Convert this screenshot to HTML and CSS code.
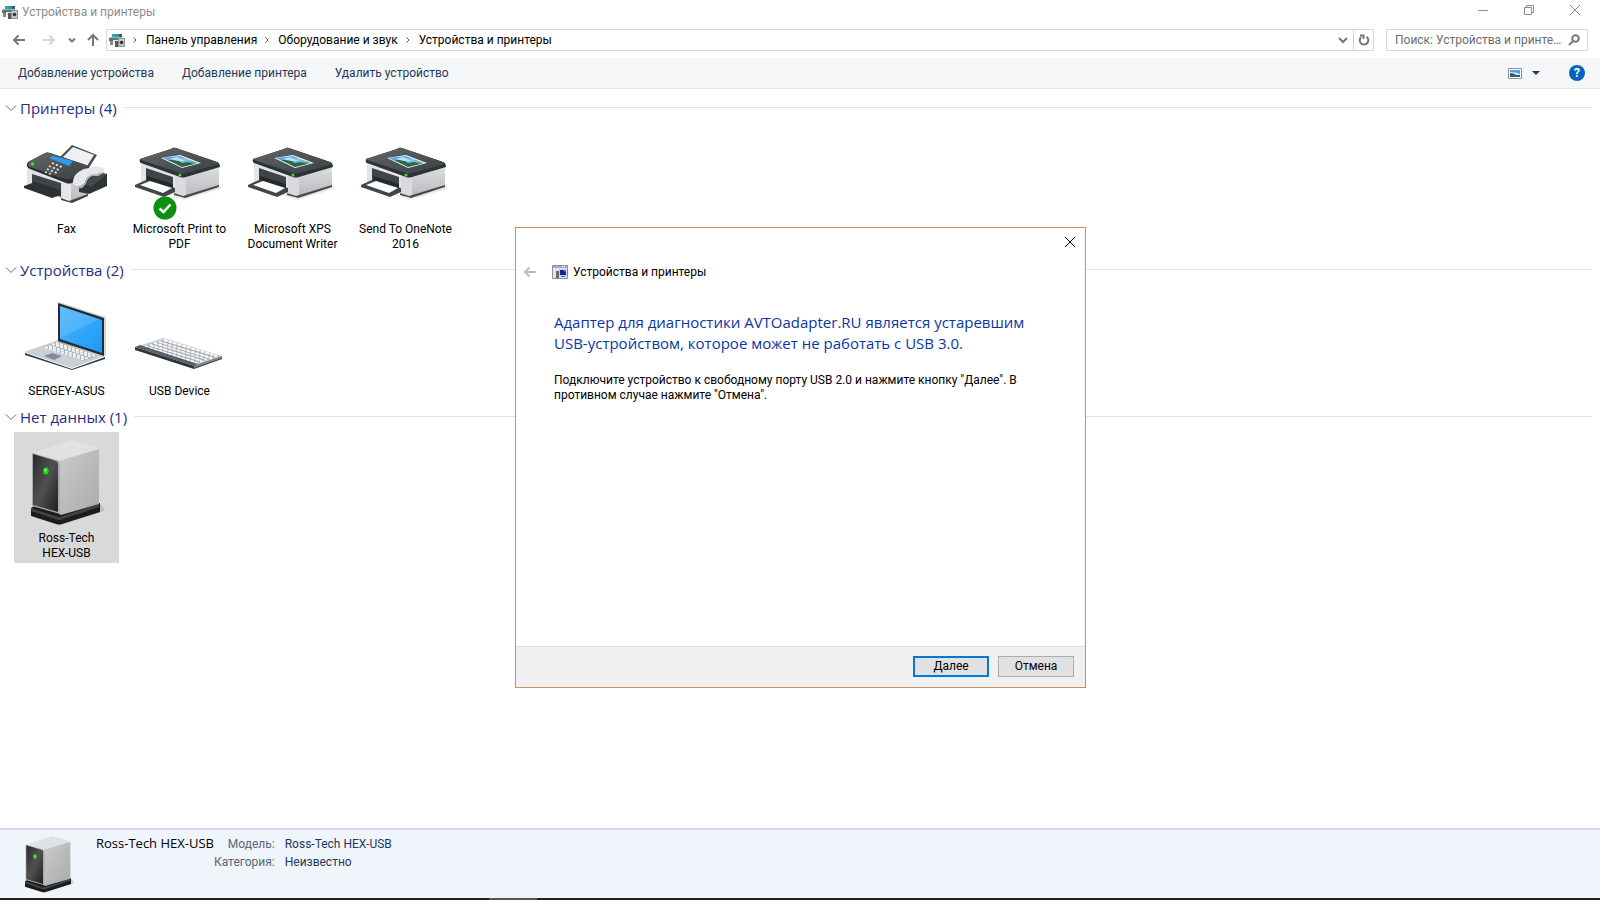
FILE: index.html
```html
<!DOCTYPE html>
<html lang="ru">
<head>
    <meta charset="UTF-8">
    <meta name="viewport" content="width=device-width, initial-scale=1.0">
    <title>Устройства и принтеры</title>
    <link rel="stylesheet" href="styles.css">
</head>
<body>
    <!-- Shared icons -->
    <svg class="sprite" width="0" height="0" aria-hidden="true">
        <defs>
            <linearGradient id="darkTop" x1="0" y1="0" x2="1" y2="1">
                <stop offset="0" stop-color="#62676a"/><stop offset="1" stop-color="#3a3f42"/>
            </linearGradient>
            <linearGradient id="whiteSide" x1="0" y1="0" x2="0" y2="1">
                <stop offset="0" stop-color="#dcdddf"/><stop offset="1" stop-color="#b9bbbe"/>
            </linearGradient>
            <linearGradient id="screenBlue" x1="0" y1="0" x2="1" y2="1">
                <stop offset="0" stop-color="#4bb4fb"/><stop offset="1" stop-color="#1b9af8"/>
            </linearGradient>
            <linearGradient id="towerFront" x1="0" y1="0" x2="1" y2="1">
                <stop offset="0" stop-color="#2b2b2b"/><stop offset="0.5" stop-color="#505050"/><stop offset="1" stop-color="#1f1f1f"/>
            </linearGradient>
            <linearGradient id="towerSide" x1="0" y1="0" x2="1" y2="1">
                <stop offset="0" stop-color="#c9cacc"/><stop offset="1" stop-color="#a9abad"/>
            </linearGradient>
            <linearGradient id="photo" x1="0" y1="0" x2="1" y2="1">
                <stop offset="0" stop-color="#2a86dd"/><stop offset="0.5" stop-color="#8cc6f3"/><stop offset="1" stop-color="#377a55"/>
            </linearGradient>
        </defs>
        <symbol id="printer" viewBox="0 0 96 96">
            <path d="M9 60 51 73 89 61 89 64 52 75 8 61z" fill="#d5d5d5" opacity=".5"/>
            <path d="M9 36 51 52V71L9 58z" fill="#e3e4e6"/>
            <path d="M51 51 87 42V61L53 71 51 71z" fill="url(#whiteSide)"/>
            <path d="M43 50 54 52V71L51 72 43 69z" fill="#d9dadc"/>
            <path d="M51 71 87 60V62L53 73 42 70V68z" fill="#44494c"/>
            <path d="M14 43 41 52V66L14 56z" fill="#3f4447"/>
            <path d="M15 51 41 59V63L15 55z" fill="#25292b"/>
            <path d="M3 60 14 55 43 63V67L32 72 3 62z" fill="#40454a"/>
            <path d="M8 60 18 56 40 63 31 68z" fill="#fff"/>
            <path d="M39 24Q41 22 44 23L85 37Q88 38 88 42L54 52Q51 53 48 52L9 38Q7 37 8 34z" fill="#2d3235"/>
            <path d="M39 24Q41 22 44 23L85 37Q88 38 85 40L54 48Q51 49 48 48L9 35Q7 34 11 33z" fill="url(#darkTop)"/>
            <path d="M29 33 48 30 69 38 50 43z" fill="#eef6fc"/>
            <path d="M31 33 48 31 66 38 50 42z" fill="url(#photo)"/>
            <path d="M36 35 44 34 50 38 56 37 62 39 50 42z" fill="#2b6946"/>
            <path d="M37 34 45 32 53 36 46 36z" fill="#bcdff7"/>
            <circle cx="48" cy="50" r="1.5" fill="#2fe52f"/>
        </symbol>
        <symbol id="fax" viewBox="0 0 96 96">
            <path d="M8 40 50 56V76L8 62z" fill="#e2e3e5"/>
            <path d="M50 57 69 48V70L53 77 50 77z" fill="url(#whiteSide)"/>
            <path d="M44 55 52 57V77L44 74z" fill="#e6e6e8"/>
            <path d="M50 76 69 69V71L53 78 42 75V73z" fill="#404548"/>
            <path d="M13 49 42 58V72L13 61z" fill="#3f4447"/>
            <path d="M5 61 16 57 42 65V70L33 73 5 63z" fill="#2d3134"/>
            <path d="M40 33 53 20 78 30 68 46z" fill="#4a4f52"/>
            <path d="M43 33 54 22 75 30 66 44z" fill="#eff0f2"/>
            <path d="M26 28Q28 27 31 28L67 40Q71 42 70 47L53 58Q50 59 47 58L11 44Q7 42 8 39L9 37z" fill="#2b2f32"/>
            <path d="M26 28Q28 27 31 28L67 40Q71 42 66 45L54 53Q50 55 46 54L11 42Q7 40 11 36z" fill="url(#darkTop)"/>
            <path d="M30 33 34 31 54 36 50 41z" fill="#2c9df4"/>
            <circle cx="13.5" cy="39" r="1.7" fill="#2fe52f"/>
            <g stroke="#e6e6e6" stroke-width="1.8" stroke-dasharray="2 2.2">
                <path d="M33 38 43 42M30 41 40 45M28 44 38 48M26 47 34 50"/>
            </g>
            <path d="M60 60 70 52 80 47 88 49V61L70 69 60 67z" fill="#2f3437"/>
            <path d="M68 60C68 54 72 53 80 49L88 49 72 62z" fill="#44494d"/>
            <path d="M54 58C54 51 58 47 65 44L75 42C81 41 85 42 86 45L85 47 79 49 74 49C69 50 67 53 66 58L62 61C58 62 55 61 54 58z" fill="#e7e8ea"/>
            <path d="M54 58C55 61 58 62 62 61L66 58C67 53 69 50 74 49L79 49 85 47 85 48 79 51 74 51C70 52 68 55 67 59L63 63C58 64 55 62 54 58z" fill="#b3b6b8"/>
        </symbol>
        <symbol id="laptop" viewBox="0 0 96 96">
            <path d="M6 66 53 82 86 70V72L53 83 6 68z" fill="#2f3e4c"/>
            <path d="M5 65 39 53 86 69 53 81z" fill="#cbd0d5"/>
            <path d="M24 60 40 54 80 68 65 74z" fill="#a9b0b7"/>
            <g stroke="#f5f6f7" stroke-width="2" stroke-dasharray="3 1.2">
                <path d="M26 60 66 73M30 59 70 72M33 57 73 70M37 56 77 69"/>
            </g>
            <path d="M25 69 33 66 43 69 35 73z" fill="#7f8c99"/>
            <path d="M40 15 87 30V68L84 70 39 54z" fill="#d4d6d8"/>
            <path d="M39 16 85 31V69L39 54z" fill="#272c30"/>
            <path d="M41 19 83 33V66L41 52z" fill="url(#screenBlue)"/>
            <path d="M41 19 81 32 41 51z" fill="#fff" opacity=".13"/>
        </symbol>
        <symbol id="keyboard" viewBox="0 0 96 96">
            <path d="M3 60 62 78 90 69V72L62 82 3 63z" fill="#2d3439"/>
            <path d="M3 60 32 51 90 69 62 79z" fill="#c6cacd"/>
            <path d="M62 79 90 69 90 71 62 81z" fill="#828a8f"/>
            <g stroke="#fafafa" stroke-width="2.4" stroke-dasharray="3.5 1.3">
                <path d="M13 59 65 76M18 58 70 74M22 56 75 72M27 55 80 71M32 53 85 69"/>
            </g>
            <g stroke="#899197" stroke-width=".7">
                <path d="M15 58.5 68 75M20 57 72 73M25 55.5 77 72M29 54 82 70"/>
            </g>
            <path d="M3 60 8 58 66 77 62 79z" fill="#596269"/>
        </symbol>
        <symbol id="tower" viewBox="0 0 96 96">
            <path d="M39 92 83 78 86 75 81 70z" fill="#777" opacity=".25"/>
            <path d="M12 74 19 70 81 69V78L43 90Q40 91 37 90L12 82z" fill="#1c1c1c"/>
            <path d="M12 74 36 82Q40 84 44 82L80 70V73L44 85Q40 87 36 85L12 77z" fill="#424242"/>
            <path d="M13 19 49 7Q53 5 57 7L77 13Q81 14 80 18L40 29z" fill="#e0e1e3"/>
            <path d="M40 27 80 15V70L42 81 40 80z" fill="url(#towerSide)"/>
            <path d="M13 19 38 26Q41 27 41 30V80L13 72z" fill="#a9aaab"/>
            <path d="M14 20 37 27Q39 28 39 30V78L14 71z" fill="url(#towerFront)"/>
            <ellipse cx="27" cy="37" rx="2.7" ry="3.6" fill="#1bd91b"/>
            <ellipse cx="26.5" cy="36" rx="1.2" ry="1.6" fill="#7dff68"/>
        </symbol>
        <symbol id="devices" viewBox="0 0 16 16">
            <path d="M3 2h9v4H3z" fill="#2b9de8"/>
            <path d="M6 2h4l1 3H6z" fill="#23b14c"/>
            <path d="M9 2h4v3h-2z" fill="#2252c8"/>
            <path d="M0 6h12v3H0z" fill="#6b6e70"/>
            <path d="M1 5h12v1H1z" fill="#a9abad"/>
            <path d="M1 9h3v4H1z" fill="#85888a"/>
            <path d="M4 8h5v3H4z" fill="#e6e6e6"/>
            <path d="M6 9h3v6H6z" fill="#55585a"/>
            <path d="M9 6h7v9H9z" fill="#909496"/>
            <path d="M10 7h5v7h-5z" fill="#c6c9ca"/>
            <circle cx="12.5" cy="10.5" r="1.8" fill="#303538"/>
        </symbol>
    </svg>

    <header class="titlebar">
        <svg class="app-icon"><use href="#devices"/></svg>
        <h1>Устройства и принтеры</h1>
        <div class="window-buttons">
            <button aria-label="Свернуть"><svg viewBox="0 0 12 12"><path d="M1 6.5h10"/></svg></button>
            <button aria-label="Развернуть"><svg viewBox="0 0 12 12"><path d="M1.5 3.5h7v7h-7zM3.5 3V1.5h7v7H9"/></svg></button>
            <button aria-label="Закрыть"><svg viewBox="0 0 12 12"><path d="M1 1 11 11M11 1 1 11"/></svg></button>
        </div>
    </header>

    <nav class="address-row">
        <div class="nav-buttons">
            <button class="back" aria-label="Назад"><svg viewBox="0 0 14 14"><path d="M13 7H2M6.5 2.5 2 7l4.5 4.5"/></svg></button>
            <button class="forward" aria-label="Вперед"><svg viewBox="0 0 14 14"><path d="M1 7h11M7.5 2.5 12 7l-4.5 4.5"/></svg></button>
            <button class="recent" aria-label="Последние"><svg viewBox="0 0 8 8"><path d="M1 2.5 4 5.5 7 2.5"/></svg></button>
            <button class="up" aria-label="Вверх"><svg viewBox="0 0 14 14"><path d="M7 13V2M2 7l5-5 5 5"/></svg></button>
        </div>
        <div class="address">
            <svg class="app-icon"><use href="#devices"/></svg>
            <svg class="sep" viewBox="0 0 8 8"><path d="M2.5 1.5 5 4 2.5 6.5"/></svg>
            <a href="#">Панель управления</a>
            <svg class="sep" viewBox="0 0 8 8"><path d="M2.5 1.5 5 4 2.5 6.5"/></svg>
            <a href="#">Оборудование и звук</a>
            <svg class="sep" viewBox="0 0 8 8"><path d="M2.5 1.5 5 4 2.5 6.5"/></svg>
            <a href="#">Устройства и принтеры</a>
            <button class="history" aria-label="Журнал"><svg viewBox="0 0 10 10"><path d="M1 3l4 4 4-4"/></svg></button>
            <button class="refresh" aria-label="Обновить"><svg viewBox="0 0 12 12"><path d="M8.5 2.8A4.3 4.3 0 1 1 3 3.2M2 1.5h3.5V5"/></svg></button>
        </div>
        <div class="search">
            <input type="text" aria-label="Поиск" placeholder="Поиск: Устройства и принтеры">
            <svg viewBox="0 0 12 12"><circle cx="7.5" cy="4.5" r="3.3"/><path d="M5 7 1 11"/></svg>
        </div>
    </nav>

    <div class="toolbar">
        <button>Добавление устройства</button>
        <button>Добавление принтера</button>
        <button>Удалить устройство</button>
        <div class="toolbar-right">
            <button class="view" aria-label="Вид">
                <svg viewBox="0 0 14 11"><path d="M.5.5h13v10H.5z" fill="#fff" stroke="#8d939a"/><path d="M2 2h10v7H2z" fill="#5b9be6"/><path d="M2 4q5 0 10 2v1H2z" fill="#d5ebfa"/><path d="M2 5q4 0 6 2l4 0v2H2z" fill="#276073"/></svg>
            </button>
            <button class="view-more" aria-label="Другие параметры"><svg viewBox="0 0 8 4"><path d="M0 0h8L4 4z" fill="#1e395b"/></svg></button>
            <button class="help" aria-label="Справка">?</button>
        </div>
    </div>

    <main>
        <section>
            <h2><svg viewBox="0 0 12 12"><path d="M1 3.5 6 8.5 11 3.5"/></svg>Принтеры (4)</h2>
            <div class="items">
                <div class="item"><svg class="device"><use href="#fax"/></svg><span>Fax</span></div>
                <div class="item">
                    <svg class="device"><use href="#printer"/></svg>
                    <svg class="check" viewBox="0 0 24 24"><circle cx="12" cy="12" r="11.5" fill="#0d900f"/><path d="M6.5 12.5 10.5 16 17.5 8.5" fill="none" stroke="#fff" stroke-width="2.5"/></svg>
                    <span>Microsoft Print to PDF</span>
                </div>
                <div class="item"><svg class="device"><use href="#printer"/></svg><span>Microsoft XPS Document Writer</span></div>
                <div class="item"><svg class="device"><use href="#printer"/></svg><span>Send To OneNote 2016</span></div>
            </div>
        </section>
        <section>
            <h2><svg viewBox="0 0 12 12"><path d="M1 3.5 6 8.5 11 3.5"/></svg>Устройства (2)</h2>
            <div class="items">
                <div class="item"><svg class="device"><use href="#laptop"/></svg><span>SERGEY-ASUS</span></div>
                <div class="item"><svg class="device"><use href="#keyboard"/></svg><span>USB Device</span></div>
            </div>
        </section>
        <section>
            <h2><svg viewBox="0 0 12 12"><path d="M1 3.5 6 8.5 11 3.5"/></svg>Нет данных (1)</h2>
            <div class="items">
                <div class="item selected"><svg class="device"><use href="#tower"/></svg><span>Ross-Tech<br>HEX-USB</span></div>
            </div>
        </section>
    </main>

    <footer class="details">
        <svg class="device"><use href="#tower"/></svg>
        <strong>Ross-Tech HEX-USB</strong>
        <dl>
            <dt>Модель:</dt><dd>Ross-Tech HEX-USB</dd>
            <dt>Категория:</dt><dd>Неизвестно</dd>
        </dl>
    </footer>
    <div class="taskbar"><div class="task"></div></div>

    <div class="dialog" role="dialog" aria-labelledby="dialogTitle">
        <div class="dialog-top">
            <button aria-label="Закрыть"><svg viewBox="0 0 12 12"><path d="M1 1 11 11M11 1 1 11"/></svg></button>
        </div>
        <div class="dialog-title">
            <button aria-label="Назад" disabled><svg viewBox="0 0 14 14"><path d="M13 7H2M6.5 2.5 2 7l4.5 4.5"/></svg></button>
            <svg class="wizard-icon" viewBox="0 0 16 14"><path d="M.5.5h15v13H.5z" fill="#e3e7ed" stroke="#8790a0"/><path d="M1 1h14v2H1z" fill="#a4abb8"/><path d="M10 1h1v1h-1zM12 1h1v1h-1z" fill="#fff"/><path d="M7 4h8v7H7z" fill="#c8ccd3"/><path d="M8 5h6v5H8z" fill="#1420b4"/><path d="M11 5h3v3z" fill="#5b77ea"/><path d="M4 6h3v7H4z" fill="#5c6c68"/><path d="M9 11h4v1H9z" fill="#596273"/></svg>
            <span id="dialogTitle">Устройства и принтеры</span>
        </div>
        <div class="dialog-body">
            <h3>Адаптер для диагностики AVTOadapter.RU является устаревшим USB-устройством, которое может не работать с USB 3.0.</h3>
            <p>Подключите устройство к свободному порту USB 2.0 и нажмите кнопку "Далее". В противном случае нажмите "Отмена".</p>
        </div>
        <div class="dialog-buttons">
            <button class="primary">Далее</button>
            <button>Отмена</button>
        </div>
    </div>
</body>
</html>
```

FILE: styles.css
```css
* { box-sizing: border-box; }
body { margin: 0; min-height: 100vh; display: flex; flex-direction: column; position: relative; background: #fff; color: #000; font: 12px/15px Roboto, "Open Sans", sans-serif; }
button { padding: 0; border: 0; background: none; color: inherit; font: inherit; display: flex; align-items: center; justify-content: center; }
a { color: inherit; text-decoration: none; }
svg { display: block; flex: none; }
h1, h2, h3, p, dl, dd { margin: 0; font-weight: normal; }
h2, h3, strong { font-family: "Open Sans", "Noto Sans", sans-serif; }
.sprite { position: absolute; }
.app-icon { width: 16px; height: 16px; }

/* Title bar */
.titlebar { display: flex; align-items: center; height: 24px; padding-left: 2px; gap: 4px; color: #8c8c8c; }
.titlebar h1 { font-size: 12px; }
.window-buttons { display: flex; align-self: flex-start; margin-left: auto; padding-right: 2px; }
.window-buttons button { width: 46px; height: 20px; }
.window-buttons svg { width: 12px; height: 12px; fill: none; stroke: #8c8c8c; }

/* Address bar */
.address-row { display: flex; align-items: center; height: 34px; padding: 0 12px 2px 12px; }
.nav-buttons { display: flex; align-items: center; }
.nav-buttons svg { width: 14px; height: 14px; fill: none; stroke: #777; stroke-width: 2; }
.nav-buttons .forward { margin-left: 16px; }
.nav-buttons .forward svg { stroke: #d4d4d4; }
.nav-buttons .recent { margin-left: 12px; }
.nav-buttons .recent svg { width: 8px; height: 8px; }
.nav-buttons .up { margin: 0 6px 0 10px; }
.address { flex: 1; display: flex; align-items: center; height: 22px; padding-left: 2px; border: 1px solid #d9d9d9; }
.address a { padding: 0 6px 0 7px; }
.address .sep { width: 8px; height: 8px; fill: none; stroke: #555; }
.address .app-icon + .sep { margin-left: 6px; }
.history { margin-left: auto; width: 20px; height: 20px; }
.history svg { width: 10px; height: 10px; fill: none; stroke: #777; stroke-width: 2; }
.refresh { width: 20px; height: 20px; border-left: 1px solid #d9d9d9; }
.refresh svg { width: 12px; height: 12px; fill: none; stroke: #777; stroke-width: 2; }
.search { display: flex; align-items: center; width: 202px; height: 22px; margin-left: 12px; padding: 0 7px 0 8px; gap: 3px; border: 1px solid #d9d9d9; }
.search input { flex: 1; min-width: 0; padding: 0; border: 0; font: inherit; text-overflow: ellipsis; }
.search input::placeholder { color: #6d6d6d; }
.search svg { width: 12px; height: 12px; fill: none; stroke: #777; stroke-width: 2; }

/* Command bar */
.toolbar { display: flex; align-items: center; height: 31px; padding: 0 15px 0 18px; gap: 28px; background: #f5f6f7; border-bottom: 1px solid #e3e4e6; color: #1e395b; }
.toolbar-right { display: flex; align-items: center; margin-left: auto; }
.view svg { width: 14px; height: 11px; }
.view-more { margin: 0 29px 0 10px; }
.view-more svg { width: 8px; height: 4px; }
.toolbar .help { width: 16px; height: 16px; border-radius: 50%; background: #0a63bd; color: #fff; font-weight: bold; }

/* Device groups */
main { flex: 1; display: flex; flex-direction: column; gap: 1px; padding: 4px 8px 0 5px; }
main h2 { display: flex; align-items: center; height: 30px; gap: 3px; padding-bottom: 1px; color: #1e2d87; font-size: 15px; line-height: 20px; }
main h2::after { content: ""; flex: 1; height: 1px; margin-left: 4px; background: #e2e2e2; }
main h2 svg { width: 12px; height: 12px; fill: none; stroke: #6a6a6a; }
.items { display: flex; gap: 8px; padding-left: 9px; }
.item { position: relative; width: 105px; padding: 2px; display: flex; flex-direction: column; align-items: center; text-align: center; }
.item span { padding-top: 1px; }
.item .device { width: 96px; height: 96px; }
.item.selected { background: #d9d9d9; }
.check { position: absolute; left: 26px; top: 73px; width: 24px; height: 24px; }

/* Details pane */
.details { display: flex; height: 70px; padding: 2px 17px; background: #f0f4fb; border-top: 2px solid #d3dbe7; }
.details .device { width: 64px; height: 64px; }
.details strong { margin: 2px 0 0 15px; font-size: 13px; line-height: 18px; font-weight: normal; }
.details dl { display: grid; grid-template-columns: auto auto; grid-auto-rows: 18px; column-gap: 10px; margin-top: 3px; line-height: 18px; }
.details dt { color: #5a6779; text-align: right; }
.details dd { color: #1e395b; }
.taskbar { height: 2px; padding-left: 489px; background: #222; }
.task { width: 48px; height: 2px; background: #555; }

/* Wizard window */
.dialog { position: absolute; left: 515px; top: 227px; width: 571px; display: flex; flex-direction: column; background: #fff; border: 1px solid #c4906c; }
.dialog-top { display: flex; justify-content: flex-end; padding: 8px 9px; }
.dialog-top svg { width: 12px; height: 12px; fill: none; stroke: #000; }
.dialog-title { display: flex; align-items: center; height: 32px; padding-left: 7px; }
.dialog-title button svg { width: 14px; height: 14px; fill: none; stroke: #bdbdbd; stroke-width: 2; }
.wizard-icon { width: 16px; height: 14px; margin: 0 5px 0 15px; }
.dialog-body { min-height: 358px; padding: 24px 50px 0 38px; }
.dialog-body h3 { color: #0a36a5; font-size: 15px; line-height: 21px; }
.dialog-body p { margin-top: 19px; }
.dialog-buttons { display: flex; justify-content: flex-end; gap: 9px; padding: 9px 11px 10px; background: #f0f0f0; border-top: 1px solid #dfdfdf; }
.dialog-buttons button { width: 76px; height: 21px; background: #e1e1e1; border: 1px solid #adadad; }
.dialog-buttons .primary { border: 2px solid #0078d7; }
```
